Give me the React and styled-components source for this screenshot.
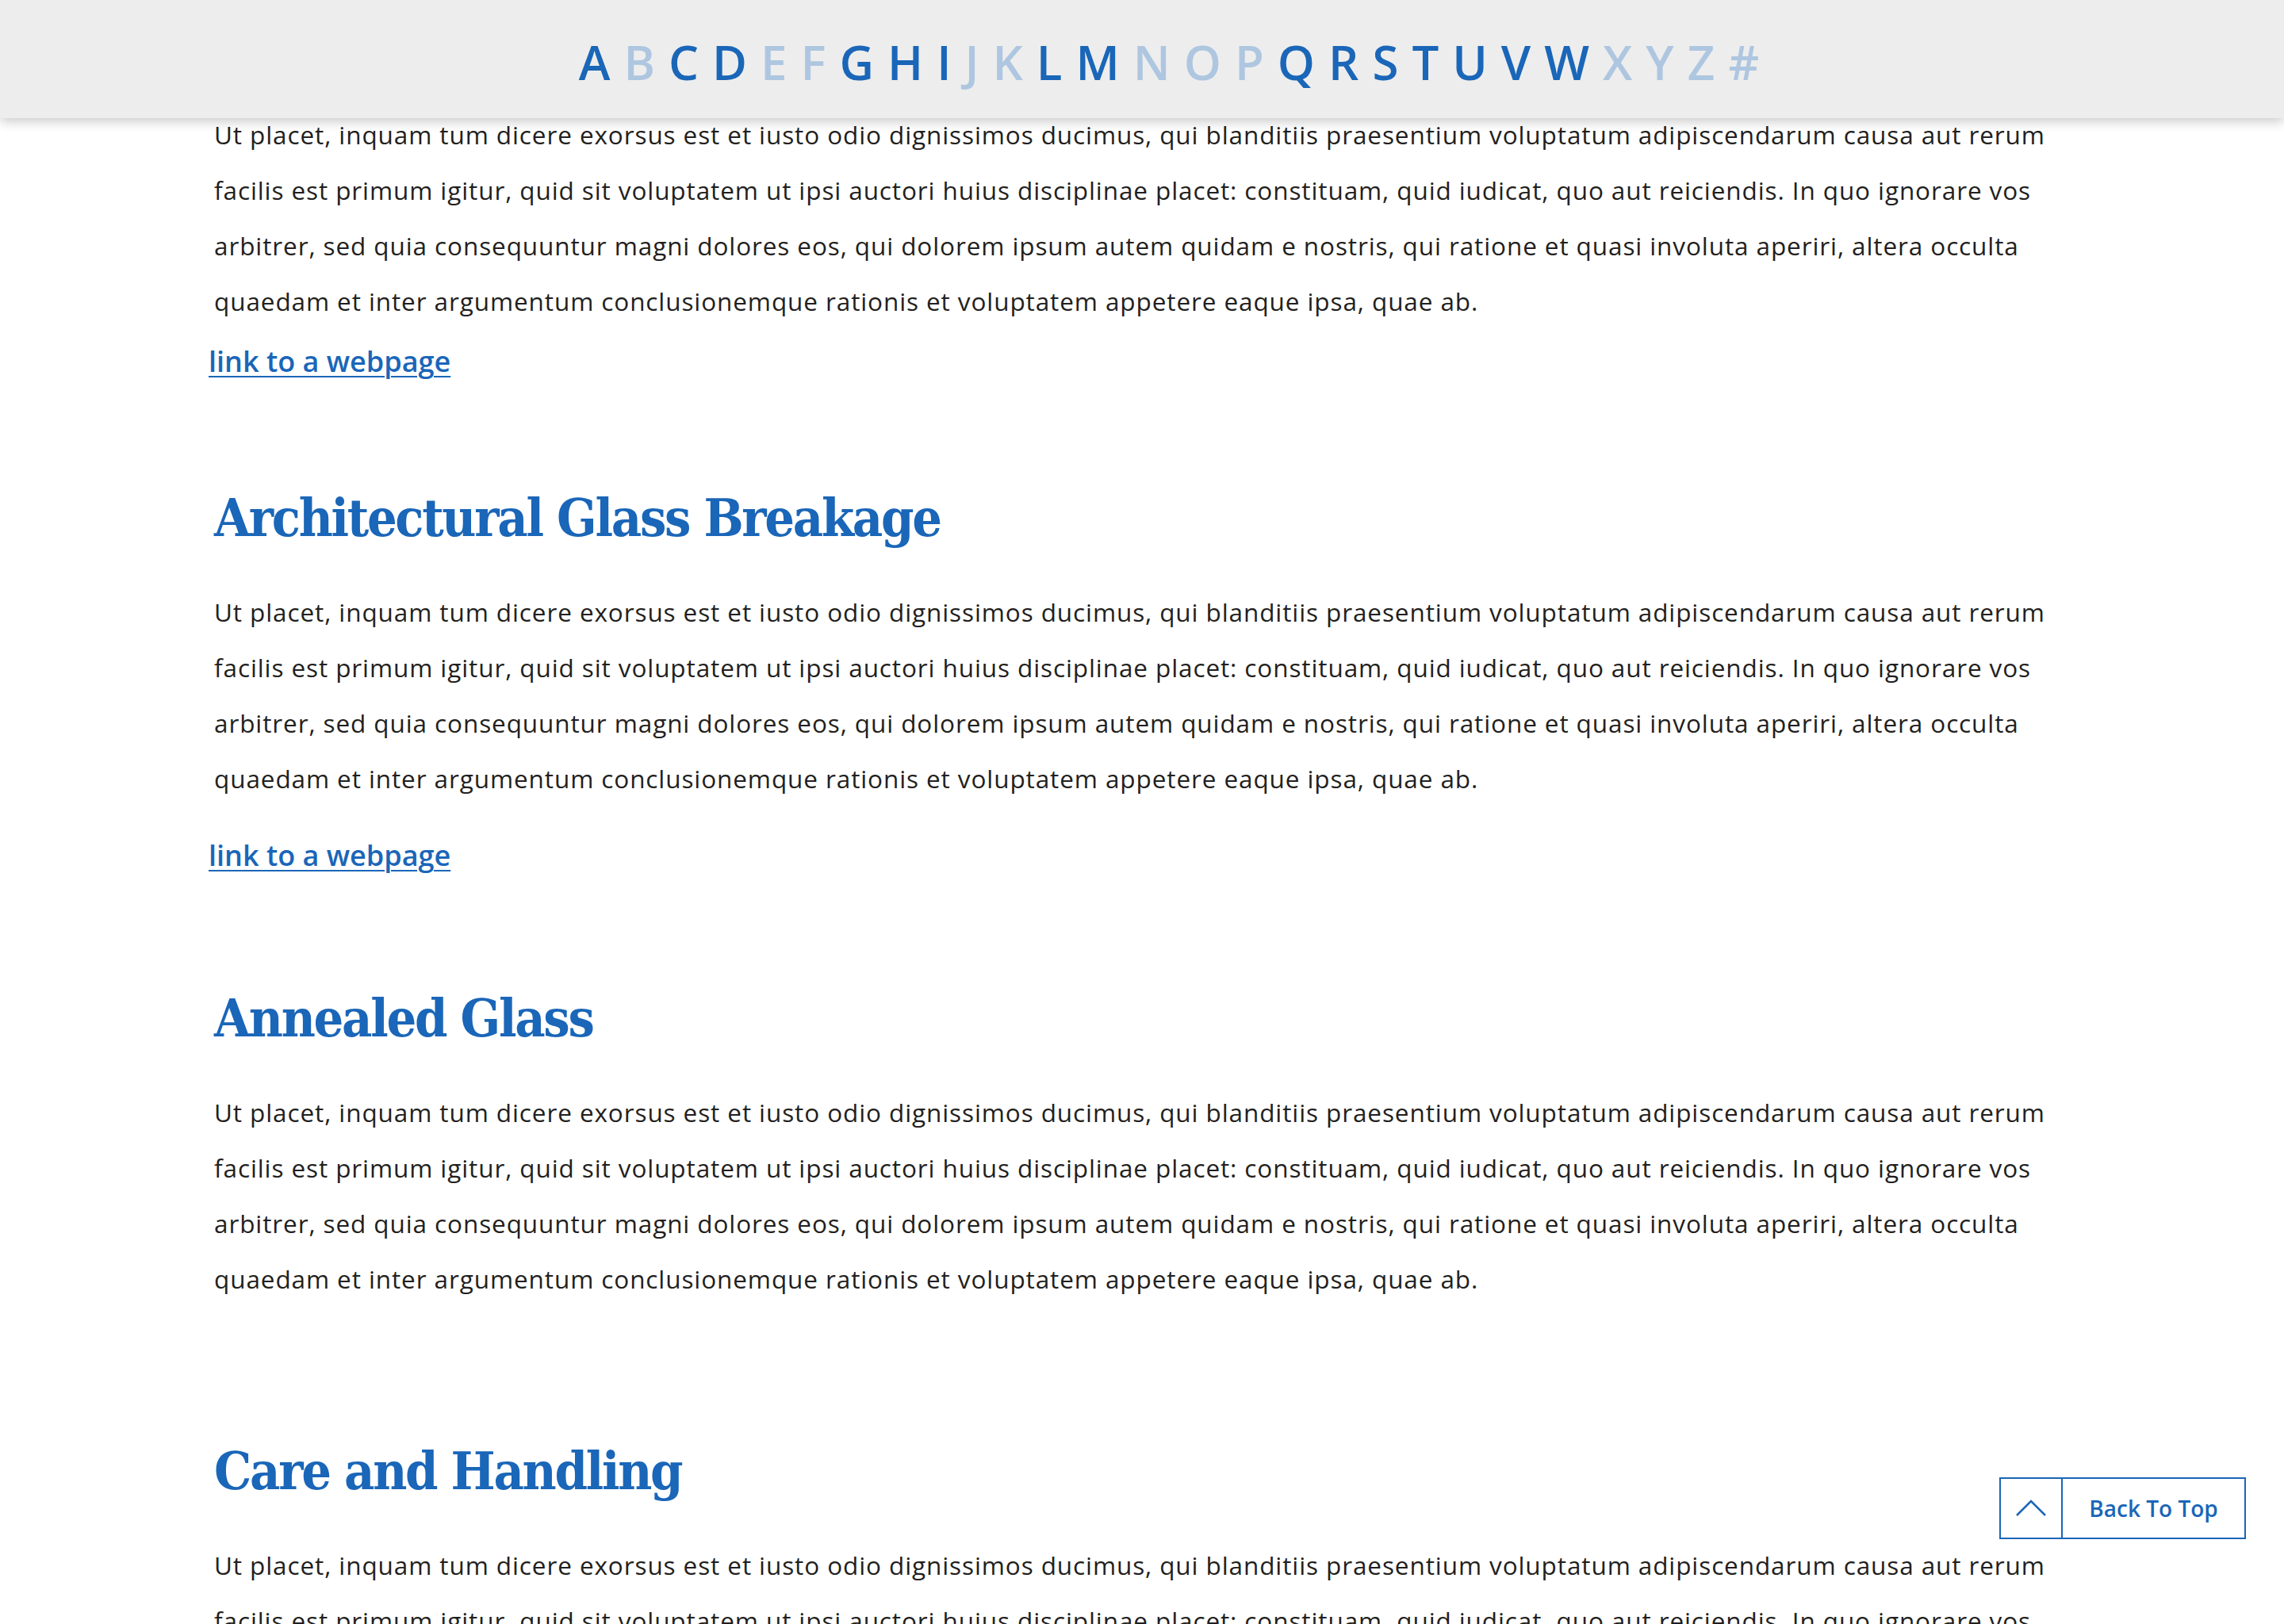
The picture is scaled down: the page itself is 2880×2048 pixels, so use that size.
import React from "react";
import styled, { createGlobalStyle } from "styled-components";

const GlobalStyle = createGlobalStyle`
  html, body {
    margin: 0;
    padding: 0;
    background: #ffffff;
  }
  body {
    font-family: "Open Sans", "Liberation Sans", sans-serif;
    color: #231f20;
  }
`;

const BLUE = "#1a66b8";
const PALE = "#aec6e0";

const Header = styled.header`
  position: fixed;
  top: 0;
  left: 0;
  right: 0;
  height: 149px;
  background: #ededed;
  box-shadow: 0 4px 14px rgba(0, 0, 0, 0.22);
  display: flex;
  align-items: center;
  justify-content: center;
  z-index: 10;
`;

const Letters = styled.ul`
  list-style: none;
  display: flex;
  align-items: center;
  margin: 6px 0 0;
  padding: 0 0 0 68px;
`;

const Letter = styled.li`
  font-family: "Open Sans", "Liberation Sans", sans-serif;
  font-size: 60px;
  font-weight: 600;
  line-height: 1;
  padding: 0 8.5px;
  color: ${(p) => (p.$active ? BLUE : PALE)};
  cursor: ${(p) => (p.$active ? "pointer" : "default")};
`;

const Page = styled.main`
  padding: 135px 0 200px 270px;
  width: 2340px;
`;

const Section = styled.section`
  display: flex;
  flex-direction: column;
  align-items: flex-start;
`;

const Heading = styled.h2`
  margin: ${(p) => p.$top}px 0 0;
  font-family: "DejaVu Serif", "Liberation Serif", serif;
  font-stretch: condensed;
  font-weight: 700;
  font-size: 66px;
  line-height: 90px;
  letter-spacing: -2.3px;
  color: ${BLUE};
`;

const Paragraph = styled.p`
  margin: ${(p) => p.$top}px 0 0;
  font-size: 31.5px;
  line-height: 70px;
  letter-spacing: 0.9px;
  color: #231f20;
`;

const PageLink = styled.a`
  margin: ${(p) => p.$top}px 0 0 -7px;
  font-size: 36px;
  line-height: 50px;
  font-weight: 600;
  color: ${BLUE};
  text-decoration: underline;
  text-decoration-thickness: 2px;
  text-underline-offset: 5px;
`;

const BackToTop = styled.button`
  position: fixed;
  right: 48px;
  bottom: 107px;
  display: flex;
  align-items: stretch;
  width: 311px;
  height: 78px;
  padding: 0;
  background: #ffffff;
  border: 2px solid ${BLUE};
  cursor: pointer;
`;

const ArrowCell = styled.span`
  width: 76px;
  display: flex;
  align-items: center;
  justify-content: center;
  border-right: 2px solid ${BLUE};
`;

const BackLabel = styled.span`
  flex: 1;
  display: flex;
  align-items: center;
  justify-content: center;
  font-family: "Open Sans", "Liberation Sans", sans-serif;
  font-size: 28px;
  font-weight: 600;
  color: ${BLUE};
`;

const letters = [
  ["A", 1], ["B", 0], ["C", 1], ["D", 1], ["E", 0], ["F", 0], ["G", 1],
  ["H", 1], ["I", 1], ["J", 0], ["K", 0], ["L", 1], ["M", 1], ["N", 0],
  ["O", 0], ["P", 0], ["Q", 1], ["R", 1], ["S", 1], ["T", 1], ["U", 1],
  ["V", 1], ["W", 1], ["X", 0], ["Y", 0], ["Z", 0], ["#", 0],
];

const lorem =
  "Ut placet, inquam tum dicere exorsus est et iusto odio dignissimos ducimus, qui blanditiis praesentium voluptatum adipiscendarum causa aut rerum facilis est primum igitur, quid sit voluptatem ut ipsi auctori huius disciplinae placet: constituam, quid iudicat, quo aut reiciendis. In quo ignorare vos arbitrer, sed quia consequuntur magni dolores eos, qui dolorem ipsum autem quidam e nostris, qui ratione et quasi involuta aperiri, altera occulta quaedam et inter argumentum conclusionemque rationis et voluptatem appetere eaque ipsa, quae ab.";

const sections = [
  { title: null, link: 16 },
  { title: "Architectural Glass Breakage", top: 127, link: 37 },
  { title: "Annealed Glass", top: 135 },
  { title: "Care and Handling", top: 162 },
];

export default function App() {
  return (
    <>
      <GlobalStyle />
      <Header>
        <Letters>
          {letters.map(([ch, on]) => (
            <Letter key={ch} $active={!!on}>
              {ch}
            </Letter>
          ))}
        </Letters>
      </Header>
      <Page>
        {sections.map((s, i) => (
          <Section key={i}>
            {s.title && <Heading $top={s.top}>{s.title}</Heading>}
            <Paragraph $top={s.title ? 39 : 0}>{lorem}</Paragraph>
            {s.link && (
              <PageLink href="#" $top={s.link}>
                link to a webpage
              </PageLink>
            )}
          </Section>
        ))}
      </Page>
      <BackToTop>
        <ArrowCell>
          <svg width="38" height="22" viewBox="0 0 38 22">
            <polyline
              points="1,20 19,2 37,20"
              fill="none"
              stroke={BLUE}
              strokeWidth="2.5"
            />
          </svg>
        </ArrowCell>
        <BackLabel>Back To Top</BackLabel>
      </BackToTop>
    </>
  );
}
